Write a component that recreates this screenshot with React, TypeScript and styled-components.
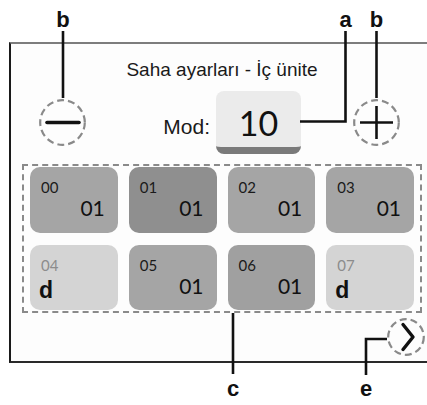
import React from "react";
import styled, { createGlobalStyle } from "styled-components";

type Tone = "mid" | "dark" | "deep" | "light";

type TileItem = {
  code: string;
  value: string;
  tone: Tone;
};

const TILES: TileItem[] = [
  { code: "00", value: "01", tone: "mid" },
  { code: "01", value: "01", tone: "dark" },
  { code: "02", value: "01", tone: "mid" },
  { code: "03", value: "01", tone: "mid" },
  { code: "04", value: "d", tone: "light" },
  { code: "05", value: "01", tone: "mid" },
  { code: "06", value: "01", tone: "deep" },
  { code: "07", value: "d", tone: "light" },
];

const TONES: Record<Tone, string> = {
  mid: "#a5a5a5",
  deep: "#a0a0a0",
  dark: "#8f8f8f",
  light: "#d4d4d4",
};

const GlobalStyle = createGlobalStyle`
  html, body {
    margin: 0;
    padding: 0;
    background: #ffffff;
  }
  body {
    font-family: "Liberation Sans", Arial, sans-serif;
    color: #111111;
  }
`;

const DashedCircle: React.FC<{ size: number; children?: React.ReactNode }> = ({
  size,
  children,
}) => (
  <svg width={size} height={size} viewBox={`0 0 ${size} ${size}`}>
    <circle
      cx={size / 2}
      cy={size / 2}
      r={size / 2 - 1.2}
      fill="none"
      stroke="#8a8a8a"
      strokeWidth={2.2}
      strokeDasharray="7 4"
    />
    {children}
  </svg>
);

export default function App() {
  return (
    <>
      <GlobalStyle />
      <Root>
        <Screen>
          <Content>
            <Title>Saha ayarları - İç ünite</Title>
            <Controls>
              <RoundButton>
                <DashedCircle size={47}>
                  <line x1={8} y1={23.5} x2={40} y2={23.5} stroke="#111" strokeWidth={3.6} strokeLinecap="round" />
                </DashedCircle>
              </RoundButton>
              <ModLabel>Mod:</ModLabel>
              <ValueBox>10</ValueBox>
              <PlusButton>
                <DashedCircle size={47}>
                  <line x1={7} y1={23.5} x2={40} y2={23.5} stroke="#111" strokeWidth={2.6} />
                  <line x1={23.5} y1={7} x2={23.5} y2={40} stroke="#111" strokeWidth={2.6} />
                </DashedCircle>
              </PlusButton>
            </Controls>
            <TileGrid>
              {TILES.map((tile) => (
                <Tile key={tile.code} $tone={tile.tone}>
                  <TileCode $muted={tile.tone === "light"}>{tile.code}</TileCode>
                  {tile.value === "d" ? (
                    <TileLetter>{tile.value}</TileLetter>
                  ) : (
                    <TileValue>{tile.value}</TileValue>
                  )}
                </Tile>
              ))}
            </TileGrid>
            <Footer>
              <DashedCircle size={38}>
                <polyline
                  points="16,6.5 26,19 16,31.5"
                  fill="none"
                  stroke="#111"
                  strokeWidth={3.4}
                  strokeLinecap="round"
                  strokeLinejoin="round"
                />
              </DashedCircle>
            </Footer>
          </Content>
        </Screen>

        <Callouts width={427} height={405} viewBox="0 0 427 405">
          <g stroke="#111" strokeWidth={2.6} fill="none">
            <line x1={63} y1={31} x2={63} y2={98} />
            <polyline points="345.5,31 345.5,121.5 300,121.5" />
            <line x1={376.5} y1={31} x2={376.5} y2={98} />
            <line x1={233} y1={313} x2={233} y2={374} />
            <polyline points="387,339 366,339 366,375" />
          </g>
          <g fontFamily='"Liberation Sans", Arial, sans-serif' fontWeight={700} fontSize={22} fill="#111" textAnchor="middle">
            <text x={63} y={27}>b</text>
            <text x={345.5} y={27}>a</text>
            <text x={376.5} y={27}>b</text>
            <text x={233} y={396}>c</text>
            <text x={366} y={396}>e</text>
          </g>
        </Callouts>
      </Root>
    </>
  );
}

const Root = styled.div`
  position: relative;
  width: 427px;
  height: 405px;
  overflow: hidden;
  background: #ffffff;
`;

const Screen = styled.div`
  box-sizing: border-box;
  margin: 42px 0 0 9px;
  width: 440px;
  height: 321px;
  background: #fdfdfd;
  border-top: 2px solid #7d7d7d;
  border-left: 2px solid #1a1a1a;
  border-bottom: 2px solid #2a2a2a;
`;

const Content = styled.div`
  width: 416px;
  display: flex;
  flex-direction: column;
`;

const Title = styled.div`
  padding: 15px 0 0 6px;
  font-size: 19px;
  line-height: 22px;
  text-align: center;
  color: #1a1a1a;
`;

const Controls = styled.div`
  margin-top: 10px;
  height: 63px;
  padding-left: 28px;
  display: flex;
  align-items: center;
`;

const RoundButton = styled.div`
  width: 47px;
  height: 47px;
  display: flex;
  margin-top: -1px;
`;

const PlusButton = styled(RoundButton)`
  margin-left: 52px;
`;

const ModLabel = styled.div`
  box-sizing: border-box;
  width: 54px;
  margin-left: 76px;
  padding-right: 6px;
  text-align: right;
  font-size: 21px;
  color: #1a1a1a;
  margin-top: 8px;
`;

const ValueBox = styled.div`
  box-sizing: border-box;
  width: 85px;
  height: 63px;
  padding-top: 6px;
  display: flex;
  align-items: center;
  justify-content: center;
  background: #ebebeb;
  border-radius: 8px;
  border-bottom: 7px solid #7a7a7a;
  font-family: Lato, "Noto Sans", sans-serif;
  font-size: 34px;
  color: #111111;
`;

const TileGrid = styled.div`
  box-sizing: border-box;
  margin: 10px 0 0 11px;
  width: 400px;
  padding: 1px 6px;
  border: 2px dashed #8a8a8a;
  display: grid;
  grid-template-columns: repeat(4, 1fr);
  grid-template-rows: 66px 65px;
  column-gap: 11px;
  row-gap: 12px;
`;

const Tile = styled.div<{ $tone: Tone }>`
  box-sizing: border-box;
  padding: 11px 13px 0 11px;
  background: ${({ $tone }) => TONES[$tone]};
  border-radius: 10px;
  display: flex;
  flex-direction: column;
  font-family: Lato, "Noto Sans", sans-serif;
`;

const TileCode = styled.div<{ $muted: boolean }>`
  font-size: 15px;
  line-height: 18px;
  color: ${({ $muted }) => ($muted ? "#8c8c8c" : "#1a1a1a")};
`;

const TileValue = styled.div`
  align-self: flex-end;
  font-size: 21px;
  line-height: 24px;
  color: #111111;
`;

const TileLetter = styled.div`
  margin: 4px 0 0 -2px;
  font-family: "Liberation Sans", Arial, sans-serif;
  font-weight: 700;
  font-size: 23px;
  line-height: 24px;
  color: #111111;
`;

const Footer = styled.div`
  margin: 5px 2px 0 0;
  display: flex;
  justify-content: flex-end;
`;

const Callouts = styled.svg`
  position: absolute;
  left: 0;
  top: 0;
  pointer-events: none;
`;
